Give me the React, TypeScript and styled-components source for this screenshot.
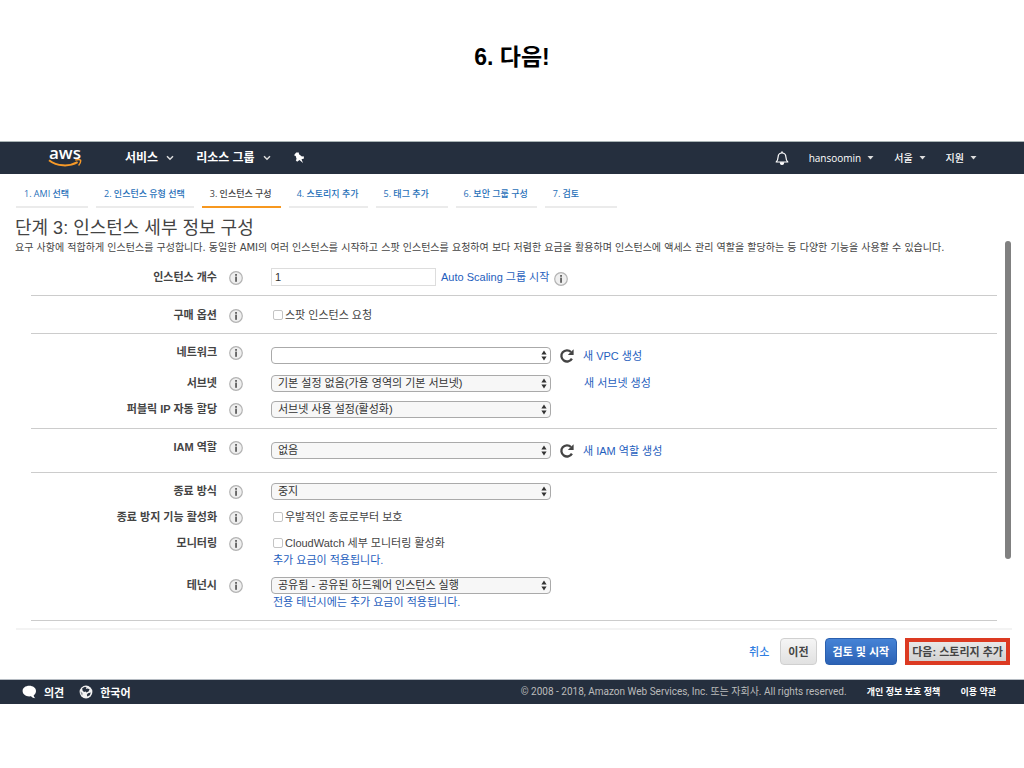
import React from "react";
import styled, { createGlobalStyle } from "styled-components";

const GlobalStyle = createGlobalStyle`
  * { box-sizing: border-box; }
  body {
    margin: 0;
    background: #fff;
    color: #444;
    font-family: "Liberation Sans", "Noto Sans CJK KR", sans-serif;
    font-size: 11px;
    line-height: 16px;
  }
  button, input, select { font-family: inherit; margin: 0; }
  a { color: #1f60bd; text-decoration: none; }
`;

const SlideTitle = styled.h1`
  margin: 0;
  padding: 42px 0 68px;
  font-size: 23px;
  line-height: 31px;
  font-weight: 700;
  color: #000;
  text-align: center;
`;

const TopBar = styled.header`
  display: flex;
  align-items: center;
  justify-content: space-between;
  height: 33px;
  padding: 0 47px;
  background: #252f3e;
  border-top: 1px solid #a9b4b5;
`;

const NavGroup = styled.nav<{ $gap: number }>`
  display: flex;
  align-items: center;
  gap: ${(p) => p.$gap}px;
`;

const Logo = styled.a`
  display: flex;
  flex-direction: column;
  align-items: center;
  width: 36px;
  height: 24px;
  margin-right: 20px;
  color: #fff;
  font-family: "Open Sans", sans-serif;
  font-size: 17px;
  font-weight: 600;
  line-height: 13px;
`;

const NavButton = styled.button<{ $small?: boolean }>`
  display: flex;
  align-items: center;
  gap: ${(p) => (p.$small ? 6 : 8)}px;
  padding: 0;
  border: 0;
  background: none;
  color: #fff;
  font-family: ${(p) =>
    p.$small ? `"Open Sans", "Noto Sans CJK KR", sans-serif` : "inherit"};
  font-size: ${(p) => (p.$small ? 10 : 12)}px;
  font-weight: ${(p) => (p.$small ? 500 : 700)};
  line-height: 16px;
`;

const Steps = styled.ol`
  display: flex;
  gap: 8px;
  margin: 0;
  padding: 11px 16px 0;
  list-style: none;
`;

const Step = styled.li<{ $active?: boolean }>`
  min-width: 72px;
  height: 23px;
  padding: 1px 9px 0 8px;
  border-bottom: 2px solid ${(p) => (p.$active ? "#f7981f" : "#ebebeb")};
  font-family: "Open Sans", "Noto Sans CJK KR", sans-serif;
  font-size: 9px;
  line-height: 16px;
  font-weight: 500;
  white-space: nowrap;
  a { color: ${(p) => (p.$active ? "#444" : "#1f6fb8")}; }
`;

const PageTitle = styled.h2`
  margin: 8px 0 0;
  padding: 0 15px;
  font-size: 18px;
  line-height: 24px;
  font-weight: 400;
  color: #444;
`;

const ScrollArea = styled.div`
  display: flex;
  justify-content: space-between;
  padding: 0 13px 0 15px;
`;

const Content = styled.div`
  flex: 1;
  min-width: 0;
`;

const ScrollThumb = styled.div`
  flex: none;
  width: 6px;
  height: 318px;
  margin-top: 1px;
  border-radius: 3px;
  background: #808080;
`;

const Description = styled.p`
  margin: 0;
  font-family: "DejaVu Sans", "Noto Sans CJK KR", sans-serif;
  font-size: 10px;
  line-height: 15px;
  white-space: nowrap;
`;

const Section = styled.section<{ $top: number; $bottom: number }>`
  display: grid;
  row-gap: 8px;
  margin: 0 8px 0 16px;
  padding: ${(p) => p.$top}px 0 ${(p) => p.$bottom}px;
  border-bottom: 1px solid #ccc;
`;

const Row = styled.div`
  display: grid;
  grid-template-columns: 186px 54px 1fr;
  align-items: start;
`;

const Label = styled.label`
  font-size: 11px;
  line-height: 18px;
  font-weight: 700;
  text-align: right;
`;

const InfoButton = styled.button<{ $inline?: boolean }>`
  display: block;
  width: 14px;
  height: 14px;
  margin: 3px 0 0 ${(p) => (p.$inline ? 5 : 12)}px;
  padding: 0;
  border: 0;
  background: none;
  svg { display: block; }
`;

const Field = styled.div<{ $lowered?: boolean }>`
  display: flex;
  align-items: center;
  min-height: 18px;
  padding: ${(p) => (p.$lowered ? "4px 0 2px" : "0")};
`;

const CountInput = styled.input`
  width: 165px;
  height: 18px;
  margin-right: 5px;
  padding: 0 3px;
  border: 1px solid #ddd;
  background: #fff;
  color: #333;
  font-size: 11px;
`;

const SelectBox = styled.span`
  position: relative;
  width: 280px;
  height: 17px;
  svg { position: absolute; right: 4px; top: 3px; pointer-events: none; }
`;

const Select = styled.select<{ $blank?: boolean }>`
  appearance: none;
  display: block;
  width: 100%;
  height: 17px;
  padding: 0 16px 1px 6px;
  border: 1px solid #aaa;
  border-radius: 4px;
  background: ${(p) => (p.$blank ? "#fff" : "#f7f7f7")};
  color: #333;
  font-size: 11px;
  line-height: 14px;
`;

const RefreshButton = styled.button`
  width: 16px;
  height: 16px;
  margin: 0 8px;
  padding: 0;
  border: 0;
  background: none;
  svg { display: block; }
`;

const RefreshGap = styled.span`
  width: 33px;
`;

const CheckLabel = styled.label`
  display: flex;
  align-items: center;
  gap: 2px;
  padding-left: 2px;
  line-height: 18px;
`;

const Checkbox = styled.input`
  appearance: none;
  width: 10px;
  height: 10px;
  border: 1px solid #c4c4c4;
  border-radius: 2px;
  background: #fff;
`;

const Note = styled.a`
  grid-column: 3;
  padding-left: 2px;
  line-height: 16px;
`;

const Actions = styled.div`
  display: flex;
  align-items: center;
  justify-content: flex-end;
  gap: 8px;
  margin: 7px 12px 0 16px;
  padding: 8px 2px 14px 0;
  border-top: 2px solid #f3f3f3;
`;

const CancelLink = styled.a`
  margin-right: 3px;
  color: #2f7de1;
  font-weight: 500;
`;

const ActionButton = styled.button<{ $primary?: boolean; $marked?: boolean }>`
  height: 27px;
  padding: 0 ${(p) => (p.$marked ? 3 : 7)}px;
  border: ${(p) =>
    p.$marked ? "4px solid #dc3a22" : p.$primary ? "1px solid #2a5fae" : "1px solid #d0d0d0"};
  border-radius: ${(p) => (p.$marked ? 0 : 4)}px;
  background: ${(p) =>
    p.$primary
      ? "linear-gradient(#4583d6, #2c62b5)"
      : p.$marked
        ? "linear-gradient(#e8e8e8, #d2d2d2)"
        : "linear-gradient(#f5f5f5, #e1e1e1)"};
  color: ${(p) => (p.$primary ? "#fff" : "#444")};
  font-size: 11px;
  font-weight: 700;
  line-height: 16px;
  white-space: nowrap;
`;

const BottomBar = styled.footer`
  display: flex;
  align-items: center;
  justify-content: space-between;
  height: 25px;
  padding: 0 28px 0 22px;
  border-top: 1px solid #b5bbc2;
  background: #252f3e;
  color: #bbb;
  font-size: 9px;
`;

const FooterGroup = styled.div<{ $gap: number }>`
  display: flex;
  align-items: center;
  gap: ${(p) => p.$gap}px;
`;

const FooterButton = styled.button`
  display: flex;
  align-items: center;
  gap: 7px;
  padding: 0;
  border: 0;
  background: none;
  color: #fff;
  font-size: 11px;
  font-weight: 700;
`;

const Copyright = styled.span`
  font-family: Roboto, "Noto Sans CJK KR", sans-serif;
  font-size: 10px;
`;

const FooterLink = styled.a`
  color: #fff;
  font-weight: 700;
`;

const Smile = () => (
  <svg width="34" height="8" viewBox="0 0 34 8" fill="none">
    <path d="M1 1.2C9 7.4 21 8 29.6 3.2" stroke="#f79a28" strokeWidth="2" />
    <path d="M27.2 1.2C29.5.4 31.6.5 32.6 1.1C32.9 2.6 32 5 30.6 6.4" stroke="#f79a28" strokeWidth="1.4" />
  </svg>
);

const Chevron = () => (
  <svg width="8" height="6" viewBox="0 0 8 6" fill="none" stroke="#ddd" strokeWidth="1.5">
    <path d="M1 1.2L4 4.2L7 1.2" />
  </svg>
);

const Caret = () => (
  <svg width="7" height="4" viewBox="0 0 7 4" fill="#ddd">
    <path d="M.5 0H6.5L3.5 3.6Z" />
  </svg>
);

const Pin = () => (
  <svg width="12" height="12" viewBox="0 0 12 12" fill="#fff">
    <path d="M3.2.6L5.8.4L6 2.3L8.9 4.4L10.7 4.2L11 6.4L8.5 7.2L10 11L6.5 8L4.1 9.8L2.8 8.3L3.6 6.9L2.7 4L1 3.2Z" />
  </svg>
);

const Bell = () => (
  <svg width="14" height="14" viewBox="0 0 14 14" fill="none" stroke="#fff" strokeWidth="1.2">
    <path d="M1.2 11C2.8 9.6 3 8 3.1 6C3.2 3.6 4.5 2 7 2S10.8 3.6 10.9 6C11 8 11.2 9.6 12.8 11Z" strokeLinejoin="round" />
    <path d="M7 .6V2" strokeWidth="1.6" />
    <path d="M5.4 11.8A1.6 1.6 0 0 0 8.6 11.8Z" fill="#fff" />
  </svg>
);

const InfoGlyph = () => (
  <svg width="14" height="14" viewBox="0 0 14 14">
    <circle cx="7" cy="7" r="6.3" fill="#efefef" stroke="#b3b3b3" strokeWidth="1.2" />
    <rect x="6.1" y="3" width="1.9" height="1.8" fill="#666" />
    <rect x="6.1" y="5.6" width="1.9" height="5.2" fill="#666" />
  </svg>
);

const RefreshGlyph = () => (
  <svg width="16" height="16" viewBox="0 0 16 16">
    <path d="M12.9 10.6A5.6 5.6 0 1 1 12 4" fill="none" stroke="#444" strokeWidth="2.3" />
    <path d="M14.6 1.2V7H8.8Z" fill="#444" />
  </svg>
);

const Arrows = () => (
  <svg width="6" height="11" viewBox="0 0 6 11" fill="#333">
    <path d="M.4 4.6L3 .4L5.6 4.6ZM.4 6.4L3 10.6L5.6 6.4Z" />
  </svg>
);

const Bubble = () => (
  <svg width="15" height="14" viewBox="0 0 15 14" fill="#fff">
    <path d="M7.3.8C11 .8 14 3 14 6C14 7.8 13.1 9.3 11.7 10.3C11.8 11.7 12.5 12.7 13.4 13.3C11.6 13.3 10 12.5 9 11.3C8.5 11.4 7.9 11.4 7.3 11.4C3.5 11.4.6 9.1.6 6C.6 3 3.5.8 7.3.8Z" />
  </svg>
);

const Globe = () => (
  <svg width="14" height="14" viewBox="0 0 14 14">
    <circle cx="7" cy="7" r="6.4" fill="#f2f2f2" />
    <path d="M3.2 3.2L6 1.8L7.6 2.6L6.8 4L8.6 3.6L10.6 4.2L9.5 6.6L7.3 7.6L6.7 6.5L5 7L3.5 5.5Z" fill="#252f3e" />
    <path d="M9 8.3L11.8 7.6L10.8 10.2L8.3 11.6L7.8 9.8Z" fill="#252f3e" />
    <path d="M1.6 6.2L3.6 8.3L3.4 10.5C2.2 9.5 1.5 8 1.6 6.2Z" fill="#8e949c" />
  </svg>
);

const Info = ({ topic, inline }: { topic: string; inline?: boolean }) => (
  <InfoButton type="button" aria-label={topic} $inline={inline}>
    <InfoGlyph />
  </InfoButton>
);

const Refresh = ({ topic }: { topic: string }) => (
  <RefreshButton type="button" aria-label={topic}>
    <RefreshGlyph />
  </RefreshButton>
);

const Dropdown = ({ id, value }: { id: string; value: string }) => (
  <SelectBox>
    <Select id={id} $blank={!value}>
      <option>{value}</option>
    </Select>
    <Arrows />
  </SelectBox>
);

type FormRowProps = {
  id: string;
  label: string;
  lowered?: boolean;
  note?: string;
  children: React.ReactNode;
};

const FormRow = ({ id, label, lowered, note, children }: FormRowProps) => (
  <Row>
    <Label htmlFor={id}>{label}</Label>
    <Info topic={label} />
    <Field $lowered={lowered}>{children}</Field>
    {note && <Note href="#pricing">{note}</Note>}
  </Row>
);

const CheckField = ({ id, text }: { id: string; text: string }) => (
  <CheckLabel>
    <Checkbox type="checkbox" id={id} />
    {text}
  </CheckLabel>
);

const steps = [
  "1. AMI 선택",
  "2. 인스턴스 유형 선택",
  "3. 인스턴스 구성",
  "4. 스토리지 추가",
  "5. 태그 추가",
  "6. 보안 그룹 구성",
  "7. 검토",
];

export default function App() {
  return (
    <>
      <GlobalStyle />
      <SlideTitle>6. 다음!</SlideTitle>
      <TopBar>
        <NavGroup $gap={22}>
          <Logo href="#home">
            aws
            <Smile />
          </Logo>
          <NavButton>서비스 <Chevron /></NavButton>
          <NavButton>리소스 그룹 <Chevron /></NavButton>
          <NavButton aria-label="고정"><Pin /></NavButton>
        </NavGroup>
        <NavGroup $gap={20}>
          <NavButton aria-label="알림"><Bell /></NavButton>
          <NavButton $small>hansoomin <Caret /></NavButton>
          <NavButton $small>서울 <Caret /></NavButton>
          <NavButton $small>지원 <Caret /></NavButton>
        </NavGroup>
      </TopBar>
      <main>
        <Steps>
          {steps.map((step, i) => (
            <Step key={step} $active={i === 2}>
              <a href={`#step-${i + 1}`}>{step}</a>
            </Step>
          ))}
        </Steps>
        <PageTitle>단계 3: 인스턴스 세부 정보 구성</PageTitle>
        <ScrollArea>
          <Content>
            <Description>
              요구 사항에 적합하게 인스턴스를 구성합니다. 동일한 AMI의 여러 인스턴스를 시작하고 스팟 인스턴스를
              요청하여 보다 저렴한 요금을 활용하며 인스턴스에 액세스 관리 역할을 할당하는 등 다양한 기능을 사용할 수
              있습니다.
            </Description>
            <Section $top={13} $bottom={9}>
              <FormRow id="count" label="인스턴스 개수">
                <CountInput id="count" defaultValue="1" />
                <a href="#auto-scaling">Auto Scaling 그룹 시작</a>
                <Info topic="Auto Scaling" inline />
              </FormRow>
            </Section>
            <Section $top={10} $bottom={9}>
              <FormRow id="spot" label="구매 옵션">
                <CheckField id="spot" text="스팟 인스턴스 요청" />
              </FormRow>
            </Section>
            <Section $top={9} $bottom={10}>
              <FormRow id="network" label="네트워크" lowered>
                <Dropdown id="network" value="" />
                <Refresh topic="네트워크 새로 고침" />
                <a href="#vpc">새 VPC 생성</a>
              </FormRow>
              <FormRow id="subnet" label="서브넷">
                <Dropdown id="subnet" value="기본 설정 없음(가용 영역의 기본 서브넷)" />
                <RefreshGap />
                <a href="#subnet-new">새 서브넷 생성</a>
              </FormRow>
              <FormRow id="public-ip" label="퍼블릭 IP 자동 할당">
                <Dropdown id="public-ip" value="서브넷 사용 설정(활성화)" />
              </FormRow>
            </Section>
            <Section $top={9} $bottom={11}>
              <FormRow id="iam" label="IAM 역할" lowered>
                <Dropdown id="iam" value="없음" />
                <Refresh topic="IAM 역할 새로 고침" />
                <a href="#iam-new">새 IAM 역할 생성</a>
              </FormRow>
            </Section>
            <Section $top={9} $bottom={10}>
              <FormRow id="shutdown" label="종료 방식">
                <Dropdown id="shutdown" value="중지" />
              </FormRow>
              <FormRow id="protect" label="종료 방지 기능 활성화">
                <CheckField id="protect" text="우발적인 종료로부터 보호" />
              </FormRow>
              <FormRow id="monitor" label="모니터링" note="추가 요금이 적용됩니다.">
                <CheckField id="monitor" text="CloudWatch 세부 모니터링 활성화" />
              </FormRow>
              <FormRow id="tenancy" label="테넌시" note="전용 테넌시에는 추가 요금이 적용됩니다.">
                <Dropdown id="tenancy" value="공유됨 - 공유된 하드웨어 인스턴스 실행" />
              </FormRow>
            </Section>
          </Content>
          <ScrollThumb />
        </ScrollArea>
        <Actions>
          <CancelLink href="#cancel">취소</CancelLink>
          <ActionButton>이전</ActionButton>
          <ActionButton $primary>검토 및 시작</ActionButton>
          <ActionButton $marked>다음: 스토리지 추가</ActionButton>
        </Actions>
      </main>
      <BottomBar>
        <FooterGroup $gap={15}>
          <FooterButton><Bubble />의견</FooterButton>
          <FooterButton><Globe />한국어</FooterButton>
        </FooterGroup>
        <FooterGroup $gap={20}>
          <Copyright>© 2008 - 2018, Amazon Web Services, Inc. 또는 자회사. All rights reserved.</Copyright>
          <FooterLink href="#privacy">개인 정보 보호 정책</FooterLink>
          <FooterLink href="#terms">이용 약관</FooterLink>
        </FooterGroup>
      </BottomBar>
    </>
  );
}
